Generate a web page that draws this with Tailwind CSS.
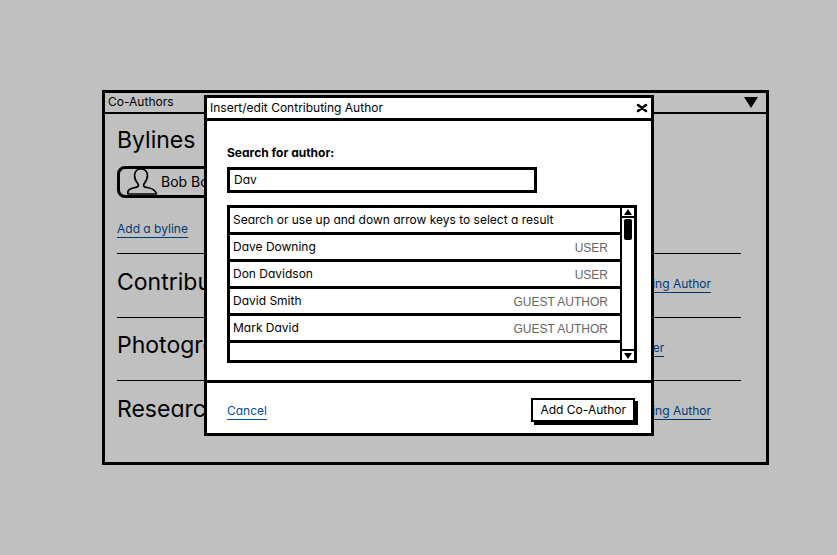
<!DOCTYPE html>
<html lang="en">
<head>
<meta charset="utf-8">
<meta name="viewport" content="width=device-width, initial-scale=1">
<title>Co-Authors</title>
<script src="https://cdn.jsdelivr.net/npm/@tailwindcss/browser@4"></script>
</head>
<body class="min-h-screen bg-[#c0c0c0] pt-[90px] pr-[68px] pb-8 pl-[102px] font-['Inter','Liberation_Sans',sans-serif] text-[12px] leading-4 text-black [font-feature-settings:'cv11'_1]">
<div class="relative">
  <section class="border-3 border-black">
    <header class="flex h-[21px] items-center justify-between border-b-2 border-black pr-2 pb-px pl-[3px]">
      <h1>Co-Authors</h1>
      <button type="button" aria-label="Collapse panel"><svg class="block h-[11px] w-[14px]" viewBox="0 0 14 11"><path d="M0 0h14L7 11z"/></svg></button>
    </header>
    <div class="pr-[25px] pb-[18px] pl-3">
      <div class="border-b border-black pb-[15px]">
        <h2 class="pt-[10px] text-[23px] leading-8">Bylines</h2>
        <div class="mt-[10px] flex h-8 w-[300px] items-end rounded-lg border-3 border-black pl-[6px]">
          <svg class="h-[27px] w-8 shrink-0" viewBox="0 0 32 27" fill="none" stroke="#000" stroke-width="1.7" stroke-linejoin="round"><path d="M2 26C1 22 4 20.500 9 19.500C12 19 13 18 12 16C9.500 13 8.500 11 8.500 7C9 3 11 1 15 1C19 1 21 3 21.500 7C21.500 11 20.500 13 18 16C17 18 18 19 21 19.500C27 20.500 29.500 22 30.500 26Z"/></svg>
          <span class="self-center pl-[3px] text-[14px]">Bob Bobson</span>
        </div>
        <a href="#" class="mt-[23px] inline-block border-b border-[#003a75] text-[#003a75]">Add a byline</a>
      </div>
      <div class="flex h-16 items-center justify-between border-b border-black pr-[30px]">
        <h2 class="pb-2 text-[23px] leading-8">Contributors</h2>
        <div class="w-[151px] pb-0.5 text-right"><a href="#" class="inline-block border-b border-[#003a75] whitespace-nowrap text-[#003a75]">Add Contributing Author</a></div>
      </div>
      <div class="flex h-[63px] items-center justify-between border-b border-black pr-[30px]">
        <h2 class="pb-2 text-[23px] leading-8">Photographers</h2>
        <div class="w-[151px] pb-0.5"><a href="#" class="inline-block border-b border-[#003a75] whitespace-nowrap text-[#003a75]">Add Photographer</a></div>
      </div>
      <div class="flex h-[63px] items-center justify-between pr-[30px]">
        <h2 class="pb-2 text-[23px] leading-8">Researchers</h2>
        <div class="w-[151px] pb-0.5 text-right"><a href="#" class="inline-block border-b border-[#003a75] whitespace-nowrap text-[#003a75]">Add Contributing Author</a></div>
      </div>
    </div>
  </section>

  <div role="dialog" aria-labelledby="dialog-title" class="absolute top-[5px] right-[115px] left-[102px] border-3 border-black bg-white">
    <header class="flex h-[23px] items-center justify-between border-b-3 border-black pr-[3px] pb-px pl-[3px]">
      <h2 id="dialog-title">Insert/edit Contributing Author</h2>
      <button type="button" aria-label="Close"><svg class="block h-[10px] w-3" viewBox="0 0 12 10" stroke="#000" stroke-width="2.600" stroke-linecap="round"><path d="M2 2L10 8M10 2L2 8"/></svg></button>
    </header>
    <div class="px-5 pb-[17px]">
      <label for="author-search" class="block pt-[24px] font-bold">Search for author:</label>
      <input id="author-search" type="text" value="Dav" class="mt-[6px] block h-[26px] w-[310px] max-w-full border-3 border-black bg-white pb-0.5 pl-1 outline-none">
      <div class="mt-3 -mr-[6px] flex border-3 border-black">
        <ul class="grow" role="listbox" aria-label="Authors">
          <li class="flex h-[27px] items-center border-b-3 border-black pl-[3px]">Search or use up and down arrow keys to select a result</li>
          <li role="option" class="flex h-[27px] items-center justify-between border-b-3 border-black pr-3 pl-[3px]">Dave Downing<span class="pt-px font-['Liberation_Sans',sans-serif] text-[#666]">USER</span></li>
          <li role="option" class="flex h-[27px] items-center justify-between border-b-3 border-black pr-3 pl-[3px]">Don Davidson<span class="pt-px font-['Liberation_Sans',sans-serif] text-[#666]">USER</span></li>
          <li role="option" class="flex h-[27px] items-center justify-between border-b-3 border-black pr-3 pl-[3px]">David Smith<span class="pt-px font-['Liberation_Sans',sans-serif] text-[#666]">GUEST AUTHOR</span></li>
          <li role="option" class="flex h-[27px] items-center justify-between border-b-3 border-black pr-3 pl-[3px]">Mark David<span class="pt-px font-['Liberation_Sans',sans-serif] text-[#666]">GUEST AUTHOR</span></li>
          <li class="h-[17px]"></li>
        </ul>
        <div class="flex w-[14px] flex-col items-center border-l-2 border-black">
          <button type="button" aria-label="Scroll up" class="flex h-[10px] w-full items-center justify-center border-b-2 border-black"><svg class="h-[6px] w-2" viewBox="0 0 8 6"><path d="M4 0L8 6H0z"/></svg></button>
          <div class="mt-px h-[21px] w-2 rounded-[2px] bg-black"></div>
          <button type="button" aria-label="Scroll down" class="mt-auto flex h-[11px] w-full items-center justify-center border-t-2 border-black"><svg class="h-[6px] w-2" viewBox="0 0 8 6"><path d="M0 0H8L4 6z"/></svg></button>
        </div>
      </div>
    </div>
    <footer class="flex h-[53px] items-center justify-between border-t-3 border-black pt-[3px] pr-4 pl-5">
      <a href="#" class="mt-1 border-b border-[#044d99] text-[#044d99]">Cancel</a>
      <button type="button" class="h-6 border-2 border-black bg-white px-[7px] shadow-[3px_3px_0_#000]">Add Co-Author</button>
    </footer>
  </div>
</div>
</body>
</html>
